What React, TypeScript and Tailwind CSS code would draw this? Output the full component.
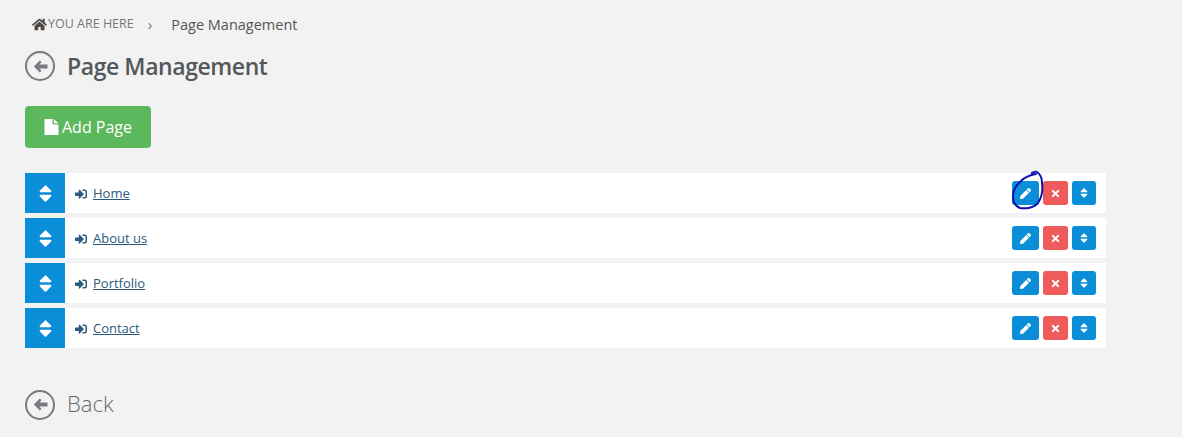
import { FaHome, FaSignInAlt, FaPen, FaTimes, FaSort } from "react-icons/fa";

const pages = ["Home", "About us", "Portfolio", "Contact"];

function BackCircle() {
  return (
    <span className="flex h-[30px] w-[30px] shrink-0 items-center justify-center rounded-full border-2 border-[#777b7f] text-[#777b7f]">
      <svg width="15" height="13" viewBox="0 0 15 13" fill="currentColor">
        <path d="M6.8 0.5 L8.6 2.3 L6.2 4.6 H14.5 V8.4 H6.2 L8.6 10.7 L6.8 12.5 L0.8 6.5 Z" />
      </svg>
    </span>
  );
}

function PageRow({ name, marked }: { name: string; marked?: boolean }) {
  return (
    <div className="flex h-10 items-center bg-white">
      <div className="flex h-10 w-10 items-center justify-center bg-[#0b8ed8] text-white">
        <FaSort className="text-[21px]" />
      </div>
      <a href="#" className="ml-[10px] flex translate-y-px items-center text-[13px] text-[#2a5a7c]">
        <FaSignInAlt className="mr-[6px] text-[12px]" />
        <span className="underline">{name}</span>
      </a>
      <div className="relative ml-auto mr-[10px] flex gap-[4px]">
        <button className="flex h-6 w-[27px] items-center justify-center rounded-[3px] bg-[#0b8ed8] text-white">
          <FaPen className="text-[11px]" />
        </button>
        <button className="flex h-6 w-[25px] items-center justify-center rounded-[3px] bg-[#ef5a5a] text-white">
          <FaTimes className="text-[11px]" />
        </button>
        <button className="flex h-6 w-6 items-center justify-center rounded-[3px] bg-[#0b8ed8] text-white">
          <FaSort className="text-[12px]" />
        </button>
        {marked && (
          <svg className="absolute left-0 top-[-11px] h-[42px] w-[36px]" viewBox="0 0 36 42" fill="none">
            <path
              d="M20 3 C22 2 24 1 25 2 C28 4 30 8 30 13 C31 20 30 27 26 33 C22 38 14 39 8 38 C3 36 1 32 1 27 C1 21 4 15 9 11 C13 7 18 5 24 4"
              stroke="#0a0fb4"
              strokeWidth="2"
              strokeLinecap="round"
            />
          </svg>
        )}
      </div>
    </div>
  );
}

export default function App() {
  return (
    <div className="h-[437px] w-[1182px] overflow-hidden bg-[#f2f2f2] font-['Open_Sans',sans-serif]">
      <div className="flex h-[49px] items-center pl-[32px]">
        <FaHome className="text-[15px] text-[#4d4844]" />
        <span className="ml-[1px] text-[12.5px] text-[#777]">YOU ARE HERE</span>
        <span className="ml-[14px] text-[15px] text-[#777]">›</span>
        <span className="ml-[19px] text-[14.5px] font-medium text-[#555]">Page Management</span>
      </div>
      <div className="flex h-[34px] items-center gap-3 pl-[25px]">
        <BackCircle />
        <h1 className="text-[23px] font-semibold tracking-[-0.42px] text-[#54575b]">Page Management</h1>
      </div>
      <div className="pl-[25px] pt-[23px]">
        <button className="flex h-[42px] w-[126px] items-center justify-center gap-[3px] rounded-[4px] bg-[#5cb85c] text-[16px] text-white">
          <svg width="15" height="16" viewBox="0 0 15 16" fill="currentColor">
            <path d="M0.5 0 H8.5 V5.5 H14.5 V16 H0.5 Z" />
            <path d="M9.8 0 L14.5 4.3 H9.8 Z" />
          </svg>
          Add Page
        </button>
      </div>
      <div className="ml-[25px] mt-[25px] flex w-[1081px] flex-col gap-[5px]">
        {pages.map((p, i) => (
          <PageRow key={p} name={p} marked={i === 0} />
        ))}
      </div>
      <div className="flex items-center gap-3 pl-[25px] pt-[40px]">
        <BackCircle />
        <span className="-translate-y-[1px] text-[22px] font-light text-[#666a6e]">Back</span>
      </div>
    </div>
  );
}
